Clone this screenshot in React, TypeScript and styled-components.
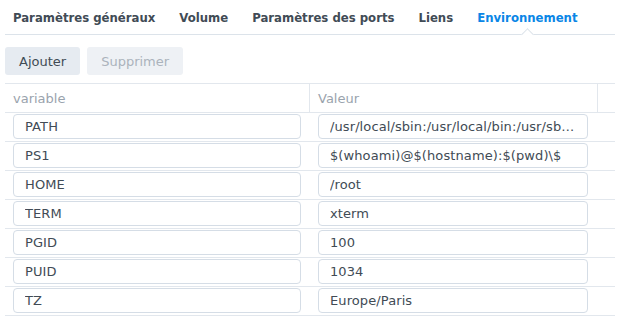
import styled, { createGlobalStyle } from "styled-components";

const GlobalStyle = createGlobalStyle`
  body {
    margin: 0;
    background: #fff;
    font-family: "DejaVu Sans", Verdana, sans-serif;
    font-size: 13px;
    color: #414b55;
  }
`;

const Page = styled.div`
  width: 610px;
  padding: 0 5px;
`;

const TabBar = styled.div`
  display: flex;
  gap: 8px;
  height: 34px;
  border-bottom: 1px solid #dce3ea;
`;

const Tab = styled.div<{ $active?: boolean }>`
  position: relative;
  display: flex;
  align-items: center;
  padding: 0 8px;
  white-space: nowrap;
  font-family: "DejaVu Sans Condensed", "DejaVu Sans", sans-serif;
  font-weight: bold;
  font-size: 13px;
  color: ${(p) => (p.$active ? "#0a86e6" : "#414b55")};
  &::after {
    content: "";
    display: ${(p) => (p.$active ? "block" : "none")};
    position: absolute;
    left: 50%;
    bottom: -5px;
    width: 8px;
    height: 8px;
    margin-left: -4px;
    background: #fff;
    border-top: 1px solid #dce3ea;
    border-left: 1px solid #dce3ea;
    transform: rotate(45deg);
  }
`;

const Toolbar = styled.div`
  display: flex;
  gap: 7px;
  padding: 12px 0 8px;
`;

const Button = styled.button<{ $disabled?: boolean }>`
  height: 28px;
  padding: 0 14px;
  border: none;
  border-radius: 3px;
  background: ${(p) => (p.$disabled ? "#eef1f5" : "#e6ebf1")};
  color: ${(p) => (p.$disabled ? "#abb3bc" : "#414b55")};
  font-family: "DejaVu Sans", Verdana, sans-serif;
  font-size: 13px;
`;

const Table = styled.div`
  border-top: 1px solid #e2e7ed;
`;

const Row = styled.div<{ $head?: boolean }>`
  display: grid;
  grid-template-columns: 305px 288px 1fr;
  height: 29px;
  box-sizing: border-box;
  border-bottom: 1px solid #e2e7ed;
  align-items: ${(p) => (p.$head ? "stretch" : "start")};
`;

const HeadCell = styled.div<{ $last?: boolean }>`
  display: flex;
  align-items: center;
  padding-left: 8px;
  color: #9aa3ad;
  border-right: ${(p) => (p.$last ? "none" : "1px solid #e2e7ed")};
`;

const Cell = styled.div<{ $left: number; $right: number }>`
  padding: 1px ${(p) => p.$right}px 0 ${(p) => p.$left}px;
`;

const Field = styled.input`
  display: block;
  width: 100%;
  height: 25px;
  box-sizing: border-box;
  padding: 0 10px 0 11px;
  border: 1px solid #d5dde6;
  border-radius: 4px;
  background: #fff;
  color: #414b55;
  font-family: "DejaVu Sans", Verdana, sans-serif;
  font-size: 13px;
  letter-spacing: 0.1px;
  text-overflow: ellipsis;
  outline: none;
`;

const vars: [string, string][] = [
  ["PATH", "/usr/local/sbin:/usr/local/bin:/usr/sbin:/usr/bin:/sbin:/bin"],
  ["PS1", "$(whoami)@$(hostname):$(pwd)\\$"],
  ["HOME", "/root"],
  ["TERM", "xterm"],
  ["PGID", "100"],
  ["PUID", "1034"],
  ["TZ", "Europe/Paris"],
];

const tabs = [
  "Paramètres généraux",
  "Volume",
  "Paramètres des ports",
  "Liens",
  "Environnement",
];

export default function App() {
  return (
    <>
      <GlobalStyle />
      <Page>
        <TabBar>
          {tabs.map((t) => (
            <Tab key={t} $active={t === "Environnement"}>
              {t}
            </Tab>
          ))}
        </TabBar>
        <Toolbar>
          <Button>Ajouter</Button>
          <Button $disabled>Supprimer</Button>
        </Toolbar>
        <Table>
          <Row $head>
            <HeadCell>variable</HeadCell>
            <HeadCell>Valeur</HeadCell>
            <HeadCell $last />
          </Row>
          {vars.map(([name, value]) => (
            <Row key={name}>
              <Cell $left={8} $right={9}>
                <Field readOnly value={name} />
              </Cell>
              <Cell $left={8} $right={10}>
                <Field readOnly value={value} />
              </Cell>
              <div />
            </Row>
          ))}
        </Table>
      </Page>
    </>
  );
}
